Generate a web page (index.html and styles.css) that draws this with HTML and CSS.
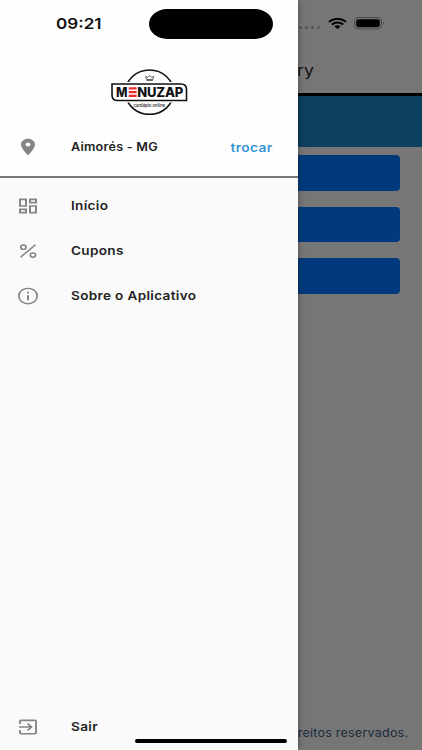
FILE: index.html
```html
<!DOCTYPE html>
<html lang="pt-BR">
<head>
<meta charset="utf-8">
<title>Menuzap</title>
<link rel="stylesheet" href="styles.css">
</head>
<body>
<div class="screen">
  <main class="page">
    <header class="topbar">
      <div class="status">
        <div class="dots"><i></i><i></i><i></i><i></i></div>
        <svg class="wifi" viewBox="0 0 18 12" preserveAspectRatio="none"><path d="M.8 4.200Q9-2.600 17.200 4.200M3.500 7Q9 2.700 14.500 7" fill="none" stroke="#000" stroke-width="2"/><path d="M5.900 9Q9 6.600 12.100 9L9 12Z"/></svg>
        <svg class="battery" viewBox="0 0 31 13"><rect x=".5" y=".5" width="27" height="11.500" rx="3.800" fill="none" stroke="#484848"/><rect x="2.200" y="2.200" width="23.600" height="8.100" rx="2.400"/><path d="M29 4.300q1.800 2 0 4Z" fill="#484848"/></svg>
      </div>
      <h1 class="title"><span>Delivery</span></h1>
    </header>
    <div class="banner"></div>
    <div class="buttons"><div class="button"></div><div class="button"></div><div class="button"></div></div>
    <footer class="footer"><span>Todos os direitos reservados.</span></footer>
  </main>
  <aside class="drawer">
    <div class="head">
      <div class="clock"><span>09:21</span></div>
      <svg class="logo" viewBox="0 0 78 46">
        <ellipse cx="39.500" cy="23.200" rx="24" ry="22.200" fill="#fff" stroke="#111" stroke-width="1.600"/>
        <path d="M2 15H71q5.500 0 5.500 5.500V31.500H7.500q-5.500 0-5.500-5.500Z" fill="#fff" stroke="#fff" stroke-width="4"/>
        <path d="M2 15H71q5.500 0 5.500 5.500V31.500H7.500q-5.500 0-5.500-5.500Z" fill="#fff" stroke="#111" stroke-width="1.600"/>
        <path d="M36.500 10.500l-.8-3.200 2.100 1.200 1.900-2.200 1.900 2.200 2.100-1.200-.8 3.200ZM36.500 11.500h6.400" fill="none" stroke="#333" stroke-width=".75"/>
        <text class="logo-name" x="6" y="28" textLength="11.500" lengthAdjust="spacingAndGlyphs">M</text>
        <path d="M18.800 18.300h7.800v2.200h-7.800zm0 3.700h7.800v2.200h-7.800zm0 3.700h7.800v2.300h-7.800z" fill="#ef282b"/>
        <text class="logo-name" x="27.300" y="28" textLength="46" lengthAdjust="spacing">NUZAP</text>
        <text class="logo-sub" x="23.500" y="38" textLength="31.500" lengthAdjust="spacingAndGlyphs">cardápio online</text>
      </svg>
      <div class="row place">
        <svg class="icon" viewBox="0 0 24 24" preserveAspectRatio="none"><path fill-rule="evenodd" d="M12 2C8.130 2 5 5.130 5 9c0 5.250 7 13 7 13s7-7.750 7-13c0-3.870-3.130-7-7-7zm0 9.500a2.500 2.500 0 1 1 0-5 2.500 2.500 0 0 1 0 5z"/></svg>
        <span class="label city">Aimorés - MG</span>
        <span class="change">trocar</span>
      </div>
    </div>
    <nav class="menu">
      <div class="row"><svg class="icon" viewBox="0 0 24 24" preserveAspectRatio="none"><path fill-rule="evenodd" d="M3 3h8v10H3zM5 5v6h4V5zM13 3h8v6h-8zM15 5v2h4V5zM13 11h8v10h-8zM15 13v6h4v-6zM3 15h8v6H3zM5 17v2h4v-2z"/></svg><span class="label">Início</span></div>
      <div class="row"><svg class="icon" viewBox="0 0 24 24" preserveAspectRatio="none"><g fill="none" stroke="#858585" stroke-width="1.700"><path d="M4.500 19.500l15-15"/><circle cx="7.400" cy="7.400" r="2.600"/><circle cx="16.900" cy="16.900" r="2.600"/></g></svg><span class="label">Cupons</span></div>
      <div class="row"><svg class="icon" viewBox="0 0 24 24" preserveAspectRatio="none"><circle cx="12" cy="12" r="9.200" fill="none" stroke="#858585" stroke-width="1.700"/><path d="M11 7h2v2h-2zM11 11h2v6h-2z"/></svg><span class="label">Sobre o Aplicativo</span></div>
      <div class="row exit"><svg class="icon" viewBox="0 0 24 24" preserveAspectRatio="none"><path d="M4 8.500V5q0-1 1-1h14q1 0 1 1v14q0 1-1 1H5q-1 0-1-1v-3.500M3 12h12M11.500 7.800l4 4.200-4 4.200" fill="none" stroke="#858585" stroke-width="1.900"/></svg><span class="label">Sair</span></div>
    </nav>
  </aside>
  <div class="island"></div>
  <div class="home"></div>
</div>
</body>
</html>
```
FILE: styles.css
```css
* { box-sizing: border-box; }
body { margin: 0; font-family: Inter, "Liberation Sans", sans-serif; }
.screen { position: relative; width: 422px; height: 750px; overflow: hidden; background: #767676; }
.page { height: 750px; display: flex; flex-direction: column; }
.topbar { height: 96px; border-bottom: 3px solid #000; }
.status { display: flex; align-items: center; height: 46px; padding-left: 299px; }
.dots { display: flex; gap: 3px; width: 29px; padding-top: 8px; }
.dots i { width: 3px; height: 3px; border-radius: 50%; background: #555; }
.wifi { width: 19px; height: 11px; }
.battery { width: 31px; height: 13px; margin-left: 7px; }
.title { margin: 15px 108px 0 0; font-size: 15.500px; line-height: 20px; font-weight: 400; text-align: right; color: #111; }
.title span { display: inline-block; transform: scaleX(1.14); transform-origin: right; }
.banner { height: 51px; background: #0d405e; }
.buttons { display: flex; flex-direction: column; gap: 16px; padding: 8px 22px 0; }
.button { height: 35.500px; border-radius: 4px; background: #003a7c; }
.footer { margin-top: auto; padding-right: 14px; height: 26px; font-size: 11.500px; line-height: 19px; text-align: right; color: #182c3d; white-space: nowrap; }
.footer span { display: inline-block; letter-spacing: .2px; transform: scaleX(1.09); transform-origin: right; }
.drawer { position: absolute; left: 0; top: 0; width: 298px; height: 750px; display: flex; flex-direction: column; background: #fafafa; box-shadow: 0 0 6px rgba(0,0,0,.4); }
.head { height: 178px; background: #fefefe; border-bottom: 2px solid #777; }
.clock { height: 68px; padding: 14px 0 0 56px; font-size: 15px; line-height: 20px; font-weight: 600; color: #111; }
.clock span { display: inline-block; transform: scaleX(1.14); transform-origin: left; }
.logo { display: block; width: 78px; height: 46px; margin: 1px 0 0 110px; }
.logo-name { font: 800 13px Inter, sans-serif; fill: #111; }
.logo-sub { font: 600 4.500px Inter, sans-serif; fill: #333; }
.row { display: flex; align-items: center; height: 45px; padding-left: 16px; }
.place { height: 64px; padding-right: 25px; }
.icon { flex: none; width: 24px; height: 20px; fill: #858585; }
.label { margin-left: 31px; font-size: 12px; font-weight: 600; color: #222; letter-spacing: .3px; white-space: nowrap; transform: scaleX(1.13); transform-origin: left; }
.city { font-size: 11.200px; letter-spacing: .2px; transform: scaleX(1.13); }
.change { margin-left: auto; font-size: 12px; font-weight: 600; letter-spacing: .3px; color: #3795d7; transform: scaleX(1.15); transform-origin: right; }
.menu { flex: 1; display: flex; flex-direction: column; padding-top: 5px; }
.exit { margin-top: auto; margin-bottom: 1px; }
.island { position: absolute; left: 149px; top: 9px; width: 124px; height: 30px; border-radius: 18px / 15px; background: #000; }
.home { position: absolute; left: 135px; top: 739px; width: 152px; height: 4px; border-radius: 2px; background: #000; }
```
